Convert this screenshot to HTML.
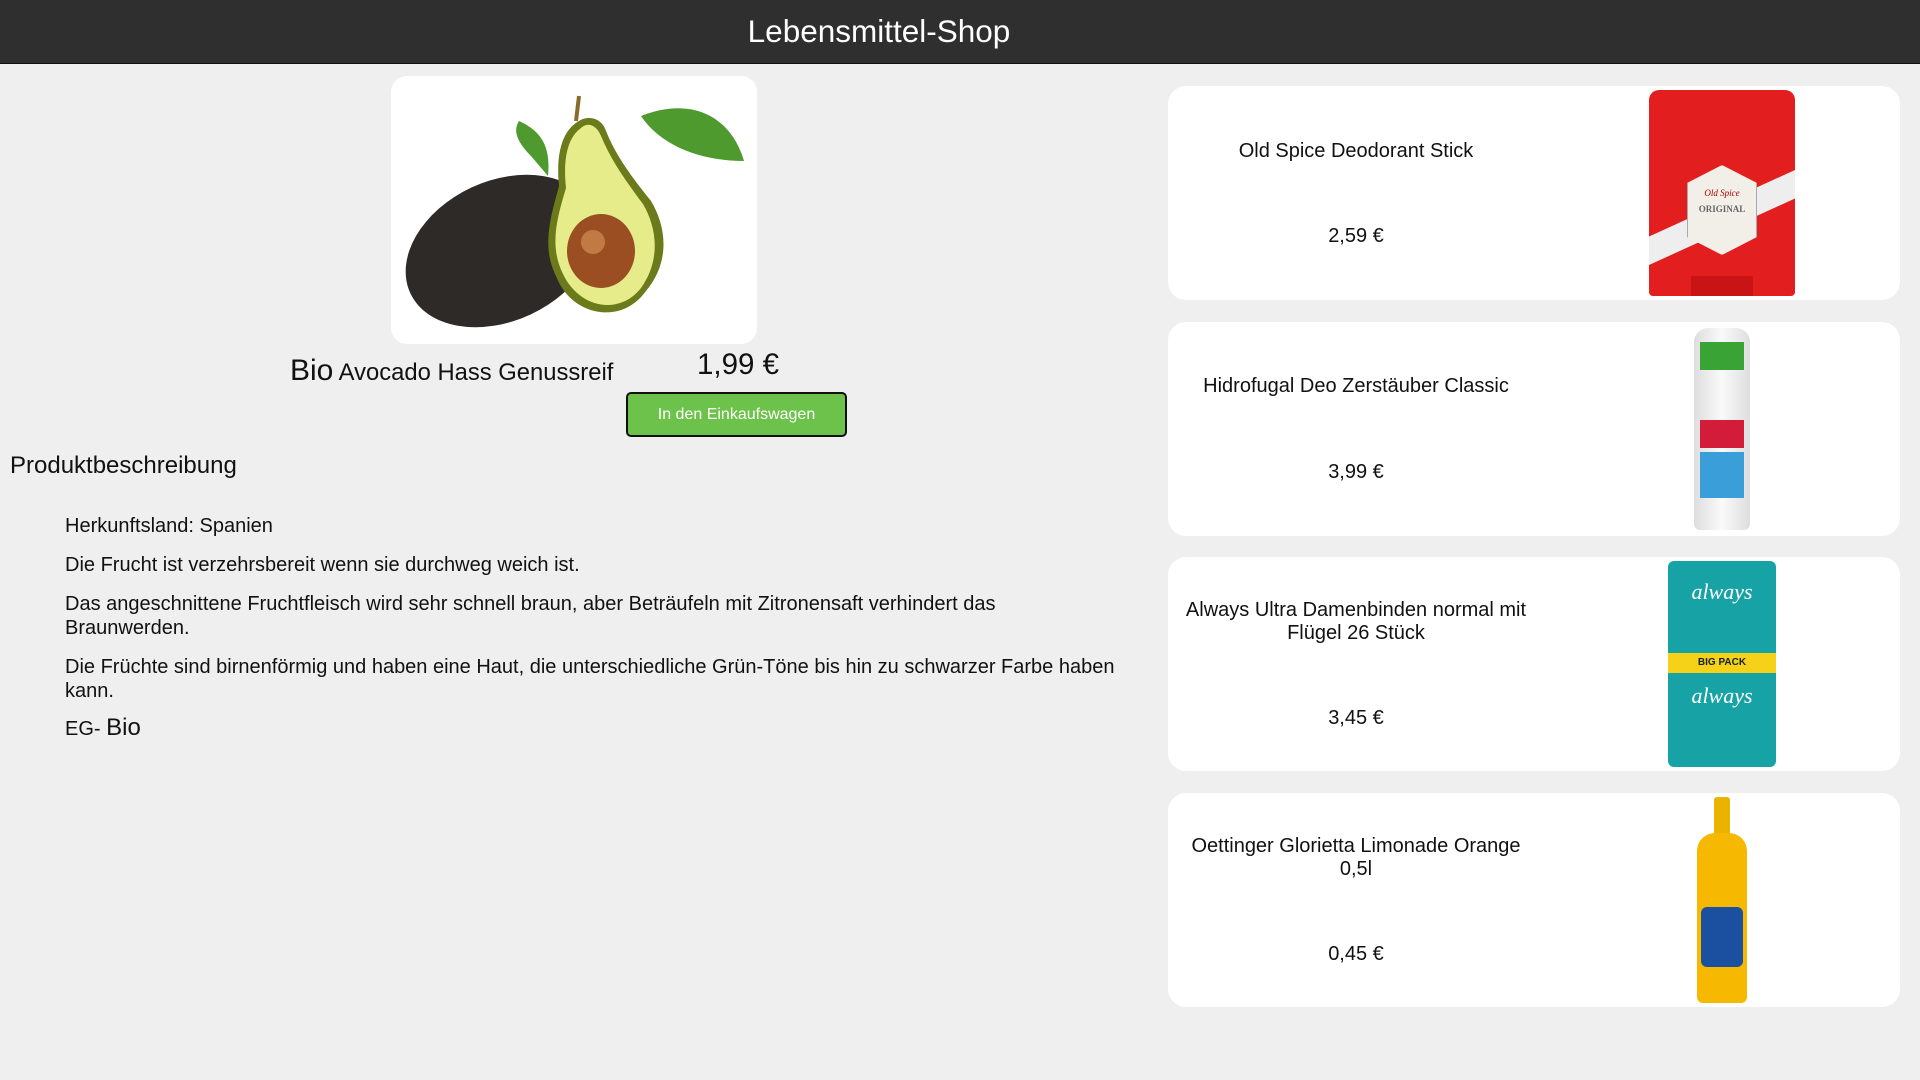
<!DOCTYPE html>
<html><head><meta charset="utf-8"><style>
*{box-sizing:border-box;margin:0;padding:0}
body{width:1920px;height:1080px;background:#efefef;font-family:"Liberation Sans",Arial,sans-serif;color:#111;position:relative;overflow:hidden}
.hdr{position:absolute;left:0;top:0;width:1920px;height:64px;background:#2f2f2f;border-bottom:1px solid #111}
.hdr span{position:absolute;left:879px;top:13px;transform:translateX(-50%);color:#fff;font-size:31.5px}
.abs{position:absolute}
.imgbox{left:391px;top:76px;width:366px;height:268px;background:#fff;border-radius:16px}
.btn{left:626px;top:392px;width:221px;height:45px;background:#6cc24a;border:2px solid #111;border-radius:5px;color:#fff;font-size:16px;text-align:center;line-height:41px}
.p{font-size:20px;left:65px;width:1070px;line-height:24px}
.card{left:1168px;width:732px;height:214px;background:#fff;border-radius:18px}
.card .n{position:absolute;left:0;width:376px;text-align:center;font-size:20px;line-height:23px}
.card .pr{position:absolute;left:0;width:376px;text-align:center;font-size:20px}
</style></head><body>
<div class="hdr"><span>Lebensmittel-Shop</span></div>
<div class="abs imgbox">
<svg width="366" height="268" viewBox="0 0 366 268">
<path d="M250 40 C300 20 340 40 353 85 C310 85 270 70 250 40Z" fill="#4f9a2f"/>
<path d="M140 80 C120 60 125 50 128 45 C150 55 160 70 157 100Z" fill="#4f9a2f"/>
<path d="M185 45 L188 20" stroke="#8a6a2a" stroke-width="4"/>
<ellipse cx="110" cy="175" rx="100" ry="70" transform="rotate(-25 110 175)" fill="#2d2a27"/>
<path d="M188 45 C170 55 165 80 168 110 C160 140 150 170 165 200 C180 240 230 250 255 215 C280 185 275 150 260 125 C240 100 225 80 215 55 C210 40 195 40 188 45Z" fill="#6b7a1a"/>
<path d="M190 52 C176 62 172 84 175 112 C166 142 158 170 172 198 C188 232 228 240 250 212 C270 184 266 152 252 128 C234 104 220 84 210 60 C205 48 196 46 190 52Z" fill="#e6ec8a"/>
<ellipse cx="210" cy="175" rx="34" ry="37" fill="#9a4e22"/>
<ellipse cx="202" cy="166" rx="12" ry="12" fill="#c27a44"/>
</svg></div>
<div class="abs" style="left:290px;top:354px;font-size:23.8px"><span style="font-size:30px">Bio</span> Avocado Hass Genussreif</div>
<div class="abs" style="left:697px;top:348px;font-size:29.5px">1,99 €</div>
<div class="abs btn">In den Einkaufswagen</div>
<div class="abs" style="left:10px;top:452px;font-size:24px">Produktbeschreibung</div>
<div class="abs p" style="top:514px">Herkunftsland: Spanien</div>
<div class="abs p" style="top:553px">Die Frucht ist verzehrsbereit wenn sie durchweg weich ist.</div>
<div class="abs p" style="top:592px;width:1010px">Das angeschnittene Fruchtfleisch wird sehr schnell braun, aber Beträufeln mit Zitronensaft verhindert das Braunwerden.</div>
<div class="abs p" style="top:655px">Die Früchte sind birnenförmig und haben eine Haut, die unterschiedliche Grün-Töne bis hin zu schwarzer Farbe haben kann.</div>
<div class="abs p" style="top:716px">EG- <span style="font-size:24px">Bio</span></div>

<div class="abs card" style="top:86px">
<div class="n" style="top:54px">Old Spice Deodorant Stick</div>
<div class="pr" style="top:139px">2,59 €</div>
<div style="position:absolute;left:481px;top:4px;width:146px;height:206px;background:#e21e1e;border-radius:10px 10px 4px 4px">
<div style="position:absolute;left:0;top:80px;width:146px;height:95px;background:#eee;clip-path:polygon(0 70%,100% 0,100% 30%,0 100%)"></div>
<div style="position:absolute;left:38px;top:75px;width:70px;height:90px;background:#f2eee8;border:1px solid #aaa;clip-path:polygon(50% 0,100% 20%,100% 80%,50% 100%,0 80%,0 20%);text-align:center;font-size:9px;color:#a00;padding-top:22px;font-family:'Liberation Serif',serif;font-style:italic">Old Spice<div style="color:#666;font-style:normal;font-weight:bold;margin-top:6px">ORIGINAL</div></div>
<div style="position:absolute;left:42px;top:186px;width:62px;height:20px;background:#c81414"></div></div>
</div>
<div class="abs card" style="top:322px">
<div class="n" style="top:53px">Hidrofugal Deo Zerstäuber Classic</div>
<div class="pr" style="top:139px">3,99 €</div>
<div style="position:absolute;left:526px;top:6px;width:56px;height:202px;background:linear-gradient(90deg,#ddd,#fafafa,#ddd);border-radius:14px 14px 6px 6px">
<div style="position:absolute;left:6px;top:14px;width:44px;height:28px;background:#3aa335"></div>
<div style="position:absolute;left:6px;top:92px;width:44px;height:28px;background:#d31c3a"></div>
<div style="position:absolute;left:6px;top:124px;width:44px;height:46px;background:#3a9fd8"></div></div>
</div>
<div class="abs card" style="top:557px">
<div class="n" style="top:42px">Always Ultra Damenbinden normal mit<br>Flügel 26 Stück</div>
<div class="pr" style="top:150px">3,45 €</div>
<div style="position:absolute;left:500px;top:4px;width:108px;height:206px;background:#17a2a6;border-radius:6px">
<div style="position:absolute;left:0;top:92px;width:108px;height:20px;background:#f5d217;font-size:10px;font-weight:bold;text-align:center;line-height:20px;color:#123">BIG PACK</div>
<div style="position:absolute;left:0;top:18px;width:108px;text-align:center;color:#fff;font-style:italic;font-size:22px;font-family:'Liberation Serif',serif">always</div>
<div style="position:absolute;left:0;top:122px;width:108px;text-align:center;color:#fff;font-style:italic;font-size:22px;font-family:'Liberation Serif',serif">always</div></div>
</div>
<div class="abs card" style="top:793px">
<div class="n" style="top:42px">Oettinger Glorietta Limonade Orange<br>0,5l</div>
<div class="pr" style="top:150px">0,45 €</div>
<div style="position:absolute;left:529px;top:4px;width:50px;height:206px">
<div style="position:absolute;left:17px;top:0;width:16px;height:40px;background:#e9b300;border-radius:3px"></div>
<div style="position:absolute;left:0;top:36px;width:50px;height:170px;background:#f6b800;border-radius:18px 18px 6px 6px"></div>
<div style="position:absolute;left:4px;top:110px;width:42px;height:60px;background:#1b4fa0;border-radius:6px"></div></div>
</div>
</body></html>
